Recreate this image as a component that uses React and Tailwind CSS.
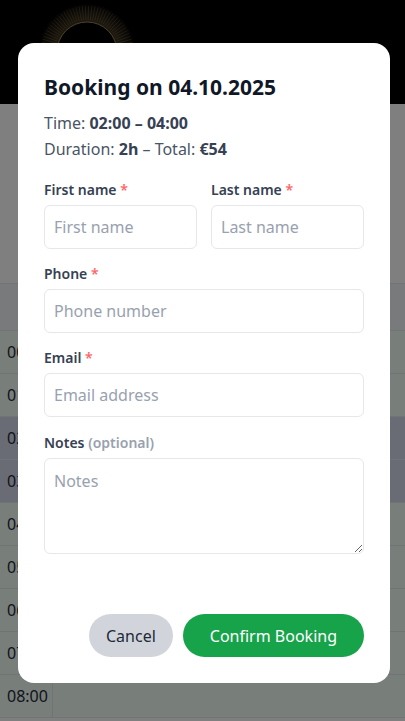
import React from 'react';

const hours = ['00:00', '01:00', '02:00', '03:00', '04:00', '05:00', '06:00', '07:00', '08:00'];
const booked = ['02:00', '03:00'];

const Logo = () => {
  const rays = Array.from({ length: 90 }, (_, i) => (i * 360) / 90);
  return (
    <svg width="120" height="104" viewBox="0 0 120 104" className="block">
      <defs>
        <radialGradient id="halo" cx="60" cy="52" r="50" gradientUnits="userSpaceOnUse">
          <stop offset="0.55" stopColor="#c8a96a" stopOpacity="0.35" />
          <stop offset="1" stopColor="#c8a96a" stopOpacity="0" />
        </radialGradient>
      </defs>
      <circle cx="60" cy="52" r="48" fill="url(#halo)" />
      {rays.map((a) => {
        const r = (a * Math.PI) / 180;
        return (
          <line
            key={a}
            x1={60 + Math.cos(r) * 32}
            y1={52 + Math.sin(r) * 32}
            x2={60 + Math.cos(r) * 46}
            y2={52 + Math.sin(r) * 46}
            stroke="#d6b877"
            strokeOpacity="0.35"
            strokeWidth="0.6"
          />
        );
      })}
      <circle cx="60" cy="52" r="30" fill="#000" stroke="#b89c62" strokeOpacity="0.8" strokeWidth="1" />
    </svg>
  );
};

const Field = ({ label, required, placeholder, className = '' }) => (
  <div className={className}>
    <label className="block text-sm leading-5 font-semibold text-gray-700 mb-[5px]">
      {label}
      {required && <span className="text-red-400"> *</span>}
    </label>
    <input
      placeholder={placeholder}
      className="block w-full h-[44px] rounded-md border border-gray-200 px-[9px] text-base text-gray-800 placeholder:text-gray-400 outline-none"
    />
  </div>
);

export default function App() {
  return (
    <div className="relative h-screen bg-white font-['Noto_Sans',sans-serif] overflow-hidden">
      <header className="h-[104px] bg-black pl-[27px]">
        <Logo />
      </header>
      <div className="h-[179px] bg-white" />
      <div className="border-t border-gray-200">
        <div className="h-[47px] bg-gray-100 border-b border-gray-200" />
        {hours.map((h) => (
          <div
            key={h}
            className={`flex h-[43px] border-b border-gray-200 ${booked.includes(h) ? 'bg-[#d2d8ea]' : 'bg-green-50'}`}
          >
            <div className="w-[53px] border-r border-gray-200 pl-[7px] flex items-center text-base text-gray-800">
              {h}
            </div>
            <div className="flex-1" />
          </div>
        ))}
      </div>

      <div className="fixed inset-0 bg-black/50" />

      <div className="fixed inset-0 pl-[18px] pt-[43px]">
        <div className="w-[372px] h-[640px] bg-white rounded-2xl px-[26px] pt-[30px] pb-[26px] flex flex-col">
          <h2 className="text-[21px] leading-7 font-bold text-gray-900">Booking on 04.10.2025</h2>
          <p className="mt-[9px] text-base leading-[26px] text-gray-600">
            Time: <span className="font-bold text-gray-700">02:00 – 04:00</span>
          </p>
          <p className="text-base leading-[26px] text-gray-600">
            Duration: <span className="font-bold text-gray-700">2h</span> – Total:{' '}
            <span className="font-bold text-gray-700">€54</span>
          </p>

          <div className="mt-[18px] grid grid-cols-2 gap-[14px]">
            <Field label="First name" required placeholder="First name" />
            <Field label="Last name" required placeholder="Last name" />
          </div>
          <Field className="mt-[15px]" label="Phone" required placeholder="Phone number" />
          <Field className="mt-[15px]" label="Email" required placeholder="Email address" />
          <div className="mt-[16px]">
            <label className="block text-sm leading-5 font-semibold text-gray-700 mb-[5px]">
              Notes <span className="text-gray-400">(optional)</span>
            </label>
            <textarea
              placeholder="Notes"
              className="block w-full h-[96px] rounded-md border border-gray-200 px-[9px] py-[10px] text-base text-gray-800 placeholder:text-gray-400 outline-none"
            />
          </div>

          <div className="mt-auto flex justify-end gap-[10px]">
            <button className="h-[43px] px-[17px] rounded-full bg-[#d1d5db] text-base text-gray-800">Cancel</button>
            <button className="h-[43px] px-[27px] rounded-full bg-[#16a34a] text-base text-white">
              Confirm Booking
            </button>
          </div>
        </div>
      </div>
    </div>
  );
}
